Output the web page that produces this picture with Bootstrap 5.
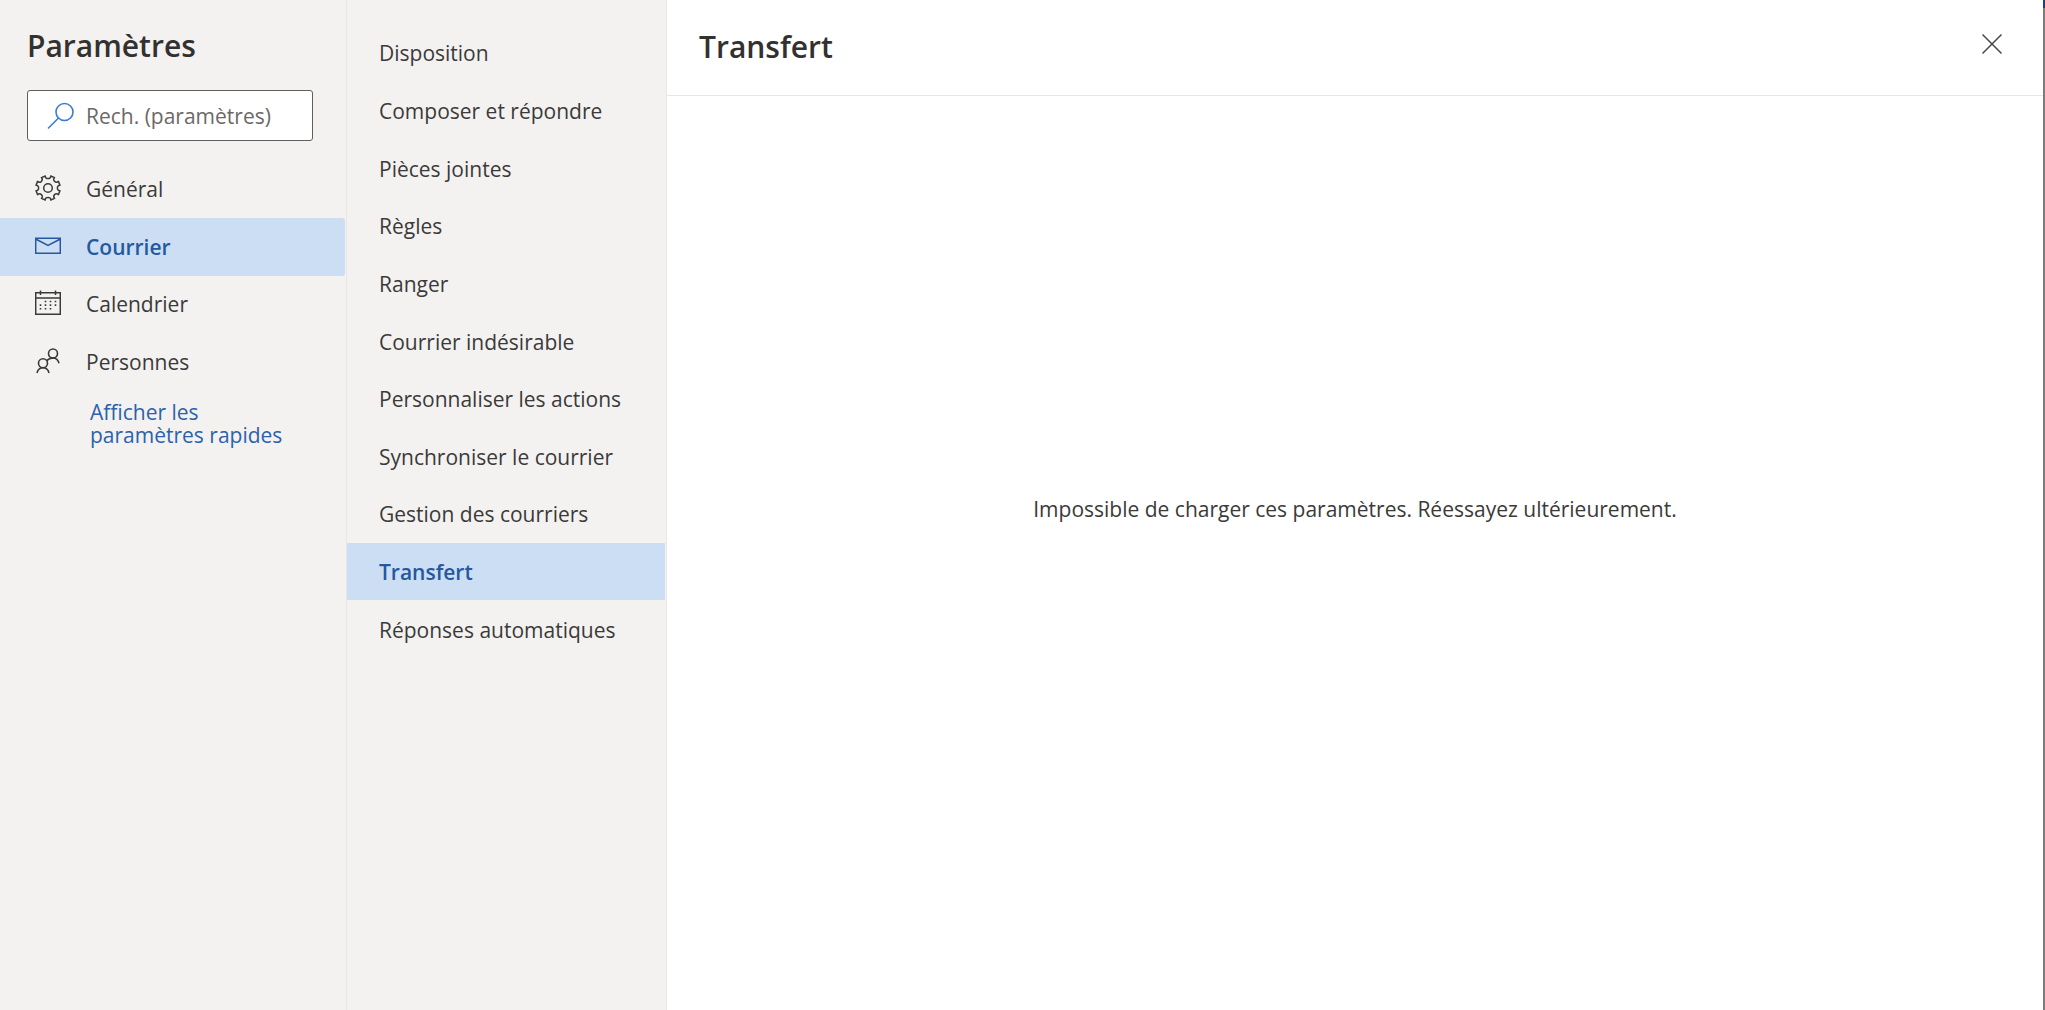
<!DOCTYPE html>
<html lang="fr">
<head>
<meta charset="utf-8">
<meta name="viewport" content="width=device-width, initial-scale=1">
<title>Paramètres - Transfert</title>
<link href="https://cdn.jsdelivr.net/npm/bootstrap@5.3.0/dist/css/bootstrap.min.css" rel="stylesheet">
<style>
  body { font-family: "Open Sans", "Noto Sans", sans-serif; font-size: 21px; line-height: 28px; color: #3b3a39; background: #fff; }
  .pane { background: #f3f2f1; border-right: 1px solid #e8e7e6; }
  .pane-main { width: 347px; padding-top: 26px; }
  .pane-sub { width: 320px; }
  .pane-title { font-size: 30px; line-height: 40px; font-weight: 600; color: #323130; }
  .pane-main .pane-title { padding-left: 27px; }
  .search-form { padding: 24px 33px 19px 27px; }
  .search-box { height: 51px; padding-left: 19px; background: #fff; border: 1px solid #605e5c; border-radius: 3px; gap: 7px; }
  .search-box .form-control { height: 44px; padding: 0 4px; font-size: 21px; line-height: 32px; color: #323130; }
  .search-box .form-control::placeholder { color: #6b6967; }
  .side-nav .nav-link, .sub-nav .nav-link { color: #3b3a39; }
  .side-nav { min-height: 231px; padding-right: 1px; }
  .side-nav .nav-link { padding: 0 0 0 35px; gap: 25px; border-radius: 0 3px 3px 0; }
  .side-nav .nav-link svg { margin-bottom: 2px; }
  .sub-nav { min-height: 634px; padding-right: 1px; }
  .sub-nav .nav-link { padding: 1px 0 0 32px; }
  .nav .nav-link.active { background: #ccdef3; color: #2459a0; font-weight: 600; }
  .quick-link { color: #2b62ab; line-height: 23px; padding: 10px 32px 0 90px; }
  .panel-head { height: 96px; border-bottom: 1px solid #e6e6e6; padding: 0 40px 2px 32px; }
  .close-btn { color: #484644; line-height: 0; margin-bottom: 6px; }
  .edge { width: 2px; background: #7b7b7b; }
  .edge-top { height: 8px; background: #1d417c; }
  .message { padding-bottom: 88px; }
  svg { fill: none; stroke: currentColor; flex: none; }
  .search-box svg { color: #3a7bd5; }
</style>
</head>
<body>
<div class="d-flex min-vh-100">
  <aside class="pane pane-main flex-shrink-0">
    <h1 class="pane-title mb-0">Paramètres</h1>
    <form class="search-form" role="search">
      <div class="search-box d-flex align-items-center">
        <svg width="28" height="28" viewBox="0 0 28 28" stroke-width="1.6"><circle cx="17.5" cy="10" r="8.5"/><path d="M11.5 16 1 26.5"/></svg>
        <label class="visually-hidden" for="q">Rechercher</label>
        <input id="q" type="text" class="form-control border-0 shadow-none bg-transparent" placeholder="Rech. (paramètres)">
      </div>
    </form>
    <nav class="side-nav nav flex-column flex-nowrap">
      <a class="nav-link flex-fill d-flex align-items-center" href="#">
        <svg width="26" height="26" viewBox="0 0 26 26" stroke-width="1.5" stroke-linejoin="round"><circle cx="13" cy="13" r="4.3"/><path d="M10.300 1Q10.200 3.600 13 3.600T15.700 1L19.600 2.600Q17.700 4.600 19.600 6.400T23.400 6.400L25 10.300Q22.400 10.200 22.400 13T25 15.700L23.400 19.600Q21.400 17.700 19.600 19.600T19.600 23.400L15.700 25Q15.800 22.400 13 22.400T10.300 25L6.400 23.400Q8.300 21.400 6.400 19.600T2.600 19.600L1 15.700Q3.600 15.800 3.600 13T1 10.300L2.600 6.400Q4.600 8.300 6.400 6.400T6.400 2.600Z"/></svg>
        Général</a>
      <a class="nav-link flex-fill active d-flex align-items-center" aria-current="page" href="#">
        <svg width="26" height="26" viewBox="0 0 26 26" stroke-width="1.5"><path d="M.7 5.200H25.300V20.300H.7ZM.7 6 13 12.500 25.300 6"/></svg>
        Courrier</a>
      <a class="nav-link flex-fill d-flex align-items-center" href="#">
        <svg width="26" height="26" viewBox="0 0 26 26" stroke-width="1.5"><path d="M.7 2.700H25.300V24.300H.7ZM.7 8H25.300M5.500.5V5M20.500.5V5"/><path stroke-width="1.600" stroke-dasharray="1.600 2" d="M10.500 10.700V21.500M15.500 10.700V21.500M20.500 10.700V18M5.500 14.300V21.500"/></svg>
        Calendrier</a>
      <a class="nav-link flex-fill d-flex align-items-center" href="#">
        <svg width="26" height="26" viewBox="0 0 26 26" stroke-width="1.6"><circle cx="18" cy="5.500" r="4.500"/><circle cx="8" cy="15.300" r="4.500"/><path d="M2 25Q3.200 19.800 8 19.800T14 25M11.700 12.800Q14 10 18 10 22.800 10.200 24 15.300"/></svg>
        Personnes</a>
    </nav>
    <div class="quick-link"><a class="text-decoration-none text-reset" href="#">Afficher les paramètres rapides</a></div>
  </aside>

  <aside class="pane pane-sub flex-shrink-0 pt-4">
    <nav class="sub-nav nav flex-column flex-nowrap">
      <a class="nav-link flex-fill d-flex align-items-center" href="#">Disposition</a>
      <a class="nav-link flex-fill d-flex align-items-center" href="#">Composer et répondre</a>
      <a class="nav-link flex-fill d-flex align-items-center" href="#">Pièces jointes</a>
      <a class="nav-link flex-fill d-flex align-items-center" href="#">Règles</a>
      <a class="nav-link flex-fill d-flex align-items-center" href="#">Ranger</a>
      <a class="nav-link flex-fill d-flex align-items-center" href="#">Courrier indésirable</a>
      <a class="nav-link flex-fill d-flex align-items-center" href="#">Personnaliser les actions</a>
      <a class="nav-link flex-fill d-flex align-items-center" href="#">Synchroniser le courrier</a>
      <a class="nav-link flex-fill d-flex align-items-center" href="#">Gestion des courriers</a>
      <a class="nav-link flex-fill d-flex align-items-center active" aria-current="page" href="#">Transfert</a>
      <a class="nav-link flex-fill d-flex align-items-center" href="#">Réponses automatiques</a>
    </nav>
  </aside>

  <main class="flex-grow-1 d-flex flex-column">
    <header class="panel-head d-flex align-items-center justify-content-between">
      <h2 class="pane-title mb-0">Transfert</h2>
      <button type="button" class="close-btn btn p-0 border-0" aria-label="Fermer">
        <svg width="22" height="22" viewBox="0 0 22 22" stroke-width="1.5"><path d="M1.500 1.500 20.500 20.500M20.500 1.500 1.500 20.500"/></svg>
      </button>
    </header>
    <div class="message flex-grow-1 d-flex align-items-center justify-content-center">
      <p class="mb-0">Impossible de charger ces paramètres. Réessayez ultérieurement.</p>
    </div>
  </main>
  <div class="edge flex-shrink-0"><div class="edge-top"></div></div>
</div>
<script src="https://cdn.jsdelivr.net/npm/bootstrap@5.3.0/dist/js/bootstrap.bundle.min.js"></script>
</body>
</html>
